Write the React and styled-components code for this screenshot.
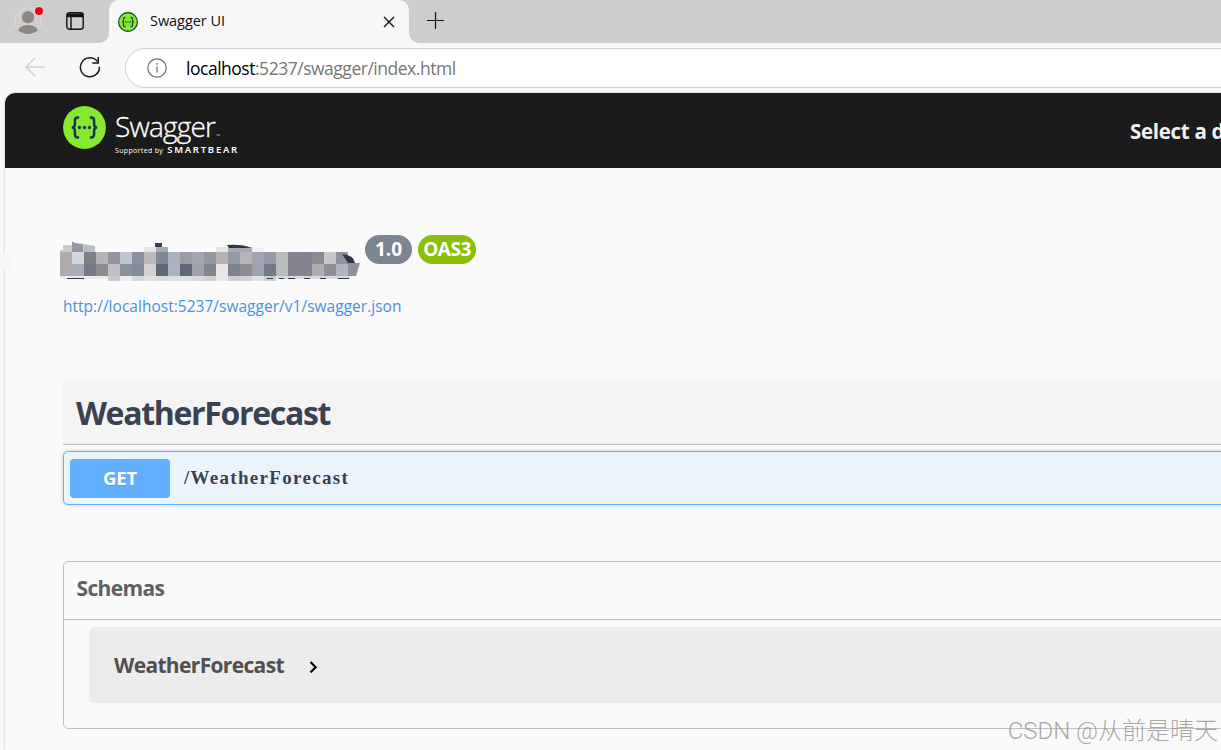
import React from 'react';
import styled, { createGlobalStyle } from 'styled-components';

const GlobalStyle = createGlobalStyle`
  * {
    box-sizing: border-box;
  }
  body {
    margin: 0;
    background: #f7f7f7;
    font-family: 'Open Sans', 'Noto Sans', sans-serif;
    overflow: hidden;
  }
  svg {
    display: block;
    flex-shrink: 0;
  }
`;

const Browser = styled.div`
  width: 100%;
  height: 750px;
  display: flex;
  flex-direction: column;
  overflow: hidden;
  position: relative;
`;

// TAB STRIP
const TabStrip = styled.div`
  display: flex;
  height: 43px;
  flex-shrink: 0;
  background: #f7f7f7;
`;

const StripStart = styled.div`
  display: flex;
  align-items: center;
  width: 109px;
  padding: 0 0 1px 14px;
  gap: 22px;
  background: #cdcdcd;
  border-bottom-right-radius: 10px;
`;

const StripEnd = styled.div`
  flex: 1;
  padding: 12px 0 0 17px;
  background: #cdcdcd;
  border-bottom-left-radius: 10px;
`;

const TabSlot = styled.div`
  width: 300px;
  background: #cdcdcd;
`;

const Tab = styled.div`
  display: flex;
  align-items: center;
  height: 43px;
  padding: 0 14px 0 9px;
  background: #f7f7f7;
  border-radius: 10px 10px 0 0;
`;

const TabTitle = styled.span`
  flex: 1;
  margin-left: 12px;
  font-size: 14.5px;
  letter-spacing: -0.05px;
  line-height: 20px;
  padding-bottom: 2px;
  color: #111;
`;

// TOOLBAR
const Toolbar = styled.div`
  display: flex;
  height: 50px;
  flex-shrink: 0;
  padding: 5px 0 0 24px;
`;

const NavIcon = styled.div`
  width: ${(props) => props.$width}px;
  padding-top: 8px;
`;

const AddressBar = styled.div`
  display: flex;
  align-items: center;
  flex: 1;
  height: 40px;
  padding-left: 21px;
  margin-right: -40px;
  background: #fff;
  border: 1px solid #cfcfcf;
  border-radius: 20px;
`;

const Address = styled.span`
  margin-left: 19px;
  padding-bottom: 1px;
  font-size: 17.5px;
  letter-spacing: -0.48px;
  color: #767676;
  white-space: nowrap;
`;

const Host = styled.span`
  color: #000;
`;

// PAGE
const Page = styled.div`
  flex: 1;
  margin-left: 5px;
  background: #fafafa;
  border-radius: 10px 0 0 0;
  box-shadow: 0 0 2px rgba(0, 0, 0, 0.3);
  overflow: hidden;
`;

const Topbar = styled.header`
  display: flex;
  justify-content: space-between;
  height: 75px;
  padding: 13px 0 0 58px;
  background: #1b1b1b;
`;

const Brand = styled.div`
  display: flex;
  gap: 9px;
`;

const BrandText = styled.div`
  color: #fff;
`;

const BrandName = styled.div`
  display: flex;
  align-items: flex-end;
  height: 38px;
  font-size: 28px;
  font-weight: 300;
  letter-spacing: -0.8px;
  line-height: 36px;
  -webkit-text-stroke: 0.3px #fff;
`;

const Trademark = styled.span`
  margin-left: 1px;
  font-size: 5px;
  letter-spacing: 0;
  line-height: 16px;
  -webkit-text-stroke: 0;
`;

const BrandByline = styled.div`
  display: flex;
  align-items: baseline;
  gap: 4px;
  font-size: 7px;
  letter-spacing: 0.34px;
  line-height: 11px;
  white-space: nowrap;
`;

const Company = styled.span`
  font-family: 'Noto Sans', sans-serif;
  font-size: 9.5px;
  font-weight: 600;
  letter-spacing: 1.75px;
`;

const SelectLabel = styled.div`
  width: 91px;
  overflow: hidden;
  padding-top: 10px;
  font-size: 20.5px;
  font-weight: 700;
  line-height: 31px;
  letter-spacing: -0.3px;
  white-space: nowrap;
  color: #f0f0f0;
`;

const Content = styled.main`
  padding-left: 58px;
`;

const Info = styled.section`
  height: 211px;
  padding-top: 67px;
`;

const TitleRow = styled.div`
  display: flex;
  align-items: flex-start;
  height: 56px;
  margin-left: -3px;
`;

const Badge = styled.span`
  width: ${(props) => props.$width}px;
  height: 29px;
  margin-left: ${(props) => props.$offset}px;
  border-radius: 15px;
  background: ${(props) => props.$color};
  color: #fff;
  font-size: 19px;
  font-weight: 700;
  letter-spacing: ${(props) => props.$spacing || 0}px;
  line-height: 28px;
  text-align: center;
`;

const SpecLink = styled.a`
  display: block;
  font-size: 15.5px;
  line-height: 30px;
  letter-spacing: 0.02px;
  color: #4990e2;
  text-decoration: none;
`;

const TagHeading = styled.h3`
  height: 66px;
  margin: 0;
  padding-left: 13px;
  background: #f4f4f4;
  border-bottom: 1px solid #bababa;
  font-size: 32px;
  font-weight: 700;
  letter-spacing: -1.32px;
  line-height: 67px;
  color: #3b4151;
`;

const Operation = styled.div`
  display: flex;
  align-items: center;
  height: 54px;
  margin: 6px -10px 0 0;
  padding: 0 6px;
  background: #ebf3fb;
  border: 1px solid #61affe;
  border-radius: 5px;
  box-shadow: 0 0 4px rgba(0, 0, 0, 0.19);
`;

const Method = styled.span`
  width: 100px;
  height: 39px;
  border-radius: 4px;
  background: #61affe;
  color: #fff;
  font-size: 18.5px;
  font-weight: 700;
  letter-spacing: -0.2px;
  line-height: 38px;
  text-align: center;
  text-shadow: 0 1px 0 rgba(0, 0, 0, 0.1);
`;

const Path = styled.span`
  margin-left: 14px;
  font-family: 'Liberation Serif', serif;
  font-size: 19px;
  font-weight: 700;
  letter-spacing: 1.3px;
  color: #3b4151;
`;

const Models = styled.section`
  height: 168px;
  margin: 56px -10px 0 0;
  border: 1px solid #bfbfbf;
  border-radius: 5px;
`;

const ModelsHeading = styled.h4`
  height: 58px;
  margin: 0;
  padding-left: 12.5px;
  border-bottom: 1px solid #bfbfbf;
  font-size: 21px;
  font-weight: 700;
  letter-spacing: -0.65px;
  line-height: 53px;
  color: #606060;
`;

const Model = styled.div`
  display: flex;
  align-items: center;
  gap: 25px;
  height: 76px;
  margin: 7px 0 0 25px;
  padding-left: 25px;
  background: #ececec;
  border-radius: 5px;
  font-size: 21px;
  font-weight: 700;
  letter-spacing: -0.66px;
  color: #505050;
`;

// Handle of the collapsed side panel
const SideHandle = styled.div`
  position: absolute;
  left: 0;
  top: 253px;
  width: 12px;
  height: 16px;
  background: #f6f6f6;
`;

const Watermark = styled.div`
  position: absolute;
  right: 3px;
  bottom: 2px;
  font-family: Roboto, 'Noto Sans CJK SC', sans-serif;
  font-size: 24px;
  font-weight: 300;
  line-height: 34px;
  white-space: nowrap;
  color: rgba(140, 140, 140, 0.75);
`;

// One colour for each block, left to right
const MOSAIC = [
  {
    y: 17,
    colors:
      'b0a9ae d0d7de 7e8085 b3b5ba 9295a0 c0c5d0 8b909b bbb9bb 828794 abb0bd 999ba5 a1a6b0 97969d b5b1b7 929aa8 b9b4b7 a1a5b0 9899a4 b7bcbd 84838f 83828f 888b94 c6c8cc 8e939d',
  },
  {
    y: 29,
    colors:
      'b0a9ae a7afb9 787887 8b8d92 c3bfc3 8a919b 828b9a d5d1d2 5f6675 adb1bf 5f6675 9da2ad 808590 ebe5e5 7b8391 8c8d92 9fa3ae 717887 b7bcbd 84838f 83828f b0abac 8c8e99 b0b5c2',
  },
];

const LOWER_EDGE = ['c8c9cd', 'ededef', 'd8d9dd', 'e1e1e3', 'd9dadd', 'dedfe2', 'dedfe1', 'd8d9dc', 'cfd0d4', 'e8e8ea', 'cccdd1', 'd1d2d5', 'e2e2e4', 'cccdcf'];

const HiddenTitle = () => (
  <svg width="301" height="50" viewBox="0 0 301 50">
    <path d="M0 17V15h3v-5h9V7l5 1 1 2h8v7z" fill="#c9cbcd" />
    <path d="M12 6l2 2 9 1v8H12z" fill="#94969f" />
    <path d="M24 9l11 2v6H24z" fill="#b9bec7" />
    <path d="M84 12h12v5H84zM156 12h12v5h-12z" fill="#e8e5e5" />
    <path d="M96 12h12v5H96zM168 12h24v5h-24z" fill="#a4abb7" />
    <path d="M95 8h7v4h-7z" fill="#3b4151" />
    <path d="M167 10q16-1 24 3h-22z" fill="#303846" />
    <path d="M192 13h12v4h-12z" fill="#eff0f1" />
    <path d="M0 41h48l3 3H0z" fill="#e9eaeb" />
    {LOWER_EDGE.map((color, i) => (
      <rect key={i} x={48 + i * 12} y="41" width="12" height="5" fill={`#${color}`} />
    ))}
    <path d="M216 41h74v3h-74z" fill="#d8dadd" />
    {MOSAIC.map((row) =>
      row.colors.split(' ').map((color, i) => (
        <rect key={`${row.y}-${i}`} x={i * 12} y={row.y} width="12" height="12" fill={`#${color}`} shapeRendering="crispEdges" />
      ))
    )}
    <path d="M282 19q12 1 13 9h-7z" fill="#303846" />
    <path d="M288 28h12l-4 13h-8z" fill="#8e8f99" />
    <path d="M7 43.5h17M207 43.5h6M219 43.5h5M228 43.5h7M244 43.5h6M260 43.5h6M278 43.5h11" stroke="#303846" strokeWidth="1.2" />
  </svg>
);

const SwaggerMark = ({ size, outline }) => (
  <svg width={size} height={size} viewBox="0 0 44 44">
    <circle cx="22" cy="22" r="21.9" fill="#85ea2d" />
    {outline && <circle cx="22" cy="22" r="20.6" fill="none" stroke="#173647" strokeWidth="2.4" />}
    <g fill="none" stroke="#173647" strokeWidth="2.5">
      <path d="M16.5 11.8h-1.3q-3 0-3 3v3.5q0 3.7-3.2 3.7 3.2 0 3.2 3.7v3.5q0 3 3 3h1.3" />
      <path d="M27.5 11.8h1.3q3 0 3 3v3.5q0 3.7 3.2 3.7-3.2 0-3.2 3.7v3.5q0 3-3 3h-1.3" />
    </g>
    <g fill="#173647">
      <circle cx="16.8" cy="22" r="1.7" />
      <circle cx="22" cy="22" r="1.7" />
      <circle cx="27.2" cy="22" r="1.7" />
    </g>
  </svg>
);

const ProfileIcon = () => (
  <svg width="30" height="30" viewBox="0 0 30 30">
    <circle cx="14" cy="15" r="13.2" fill="#d1cecb" stroke="#dfddda" />
    <circle cx="14" cy="11.2" r="6.2" fill="#8c8885" />
    <path d="M4 24q3-5 10-5t10 5q-4 4-10 4T4 24z" fill="#8c8885" />
    <circle cx="25" cy="5" r="4.7" fill="#e3e3e3" />
    <circle cx="25" cy="5" r="4" fill="#e60012" />
  </svg>
);

const TabActionsIcon = () => (
  <svg width="18" height="18" viewBox="0 0 18 18" fill="none" stroke="#111" strokeWidth="1.4">
    <rect x="0.8" y="0.8" width="16.4" height="16.4" rx="2.6" />
    <path d="M1 1.5h16v3.7H1z" fill="#111" stroke="none" />
    <path d="M5 5v12" />
  </svg>
);

export default function App() {
  return (
    <Browser>
      <GlobalStyle />
      <TabStrip>
        <StripStart>
          <ProfileIcon />
          <TabActionsIcon />
        </StripStart>
        <TabSlot>
          <Tab>
            <SwaggerMark size={20} outline />
            <TabTitle>Swagger UI</TabTitle>
            <svg width="12" height="12" viewBox="0 0 12 12" stroke="#111" strokeWidth="1.4">
              <path d="M1 1l10 10M11 1L1 11" />
            </svg>
          </Tab>
        </TabSlot>
        <StripEnd>
          <svg width="19" height="18" viewBox="0 0 19 18" stroke="#111" strokeWidth="1.2">
            <path d="M1 8.5h17M9.5 0v17" />
          </svg>
        </StripEnd>
      </TabStrip>
      <Toolbar>
        <NavIcon $width={55}>
          <svg width="22" height="22" viewBox="0 0 22 22" fill="none" stroke="#cfcfcf" strokeWidth="1.4">
            <path d="M21 11H2M11 2L2 11l9 9" />
          </svg>
        </NavIcon>
        <NavIcon $width={46}>
          <svg width="22" height="22" viewBox="0 0 22 22" fill="none" stroke="#191919" strokeWidth="1.5">
            <path d="M20.4 10.8A9.5 9.5 0 1 1 18.3 5.3M19.3 1v6h-6" />
          </svg>
        </NavIcon>
        <AddressBar>
          <svg width="20" height="20" viewBox="0 0 20 20" fill="none" stroke="#707070" strokeWidth="1.2">
            <circle cx="10" cy="10" r="9.2" />
            <path d="M10 8.5v6" />
            <circle cx="10" cy="5.8" r="0.9" fill="#707070" stroke="none" />
          </svg>
          <Address>
            <Host>localhost</Host>:5237/swagger/index.html
          </Address>
        </AddressBar>
      </Toolbar>
      <Page>
        <Topbar>
          <Brand>
            <SwaggerMark size={43} />
            <BrandText>
              <BrandName>
                Swagger<Trademark>™</Trademark>
              </BrandName>
              <BrandByline>
                Supported by <Company>SMARTBEAR</Company>
              </BrandByline>
            </BrandText>
          </Brand>
          <SelectLabel>Select a definition</SelectLabel>
        </Topbar>
        <Content>
          <Info>
            <TitleRow>
              <HiddenTitle />
              <Badge $width={47} $offset={4} $color="#7d8492">1.0</Badge>
              <Badge $width={58} $offset={6} $color="#89bf04" $spacing={-0.5}>OAS3</Badge>
            </TitleRow>
            <SpecLink href="#">http://localhost:5237/swagger/v1/swagger.json</SpecLink>
          </Info>
          <TagHeading>WeatherForecast</TagHeading>
          <Operation>
            <Method>GET</Method>
            <Path>/WeatherForecast</Path>
          </Operation>
          <Models>
            <ModelsHeading>Schemas</ModelsHeading>
            <Model>
              WeatherForecast
              <svg width="10" height="16" viewBox="0 0 10 16" fill="none" stroke="#000" strokeWidth="2.2">
                <path d="M1.5 5l5.2 5.2-5.2 5.2" />
              </svg>
            </Model>
          </Models>
        </Content>
      </Page>
      <SideHandle />
      <Watermark>CSDN @从前是晴天</Watermark>
    </Browser>
  );
}
